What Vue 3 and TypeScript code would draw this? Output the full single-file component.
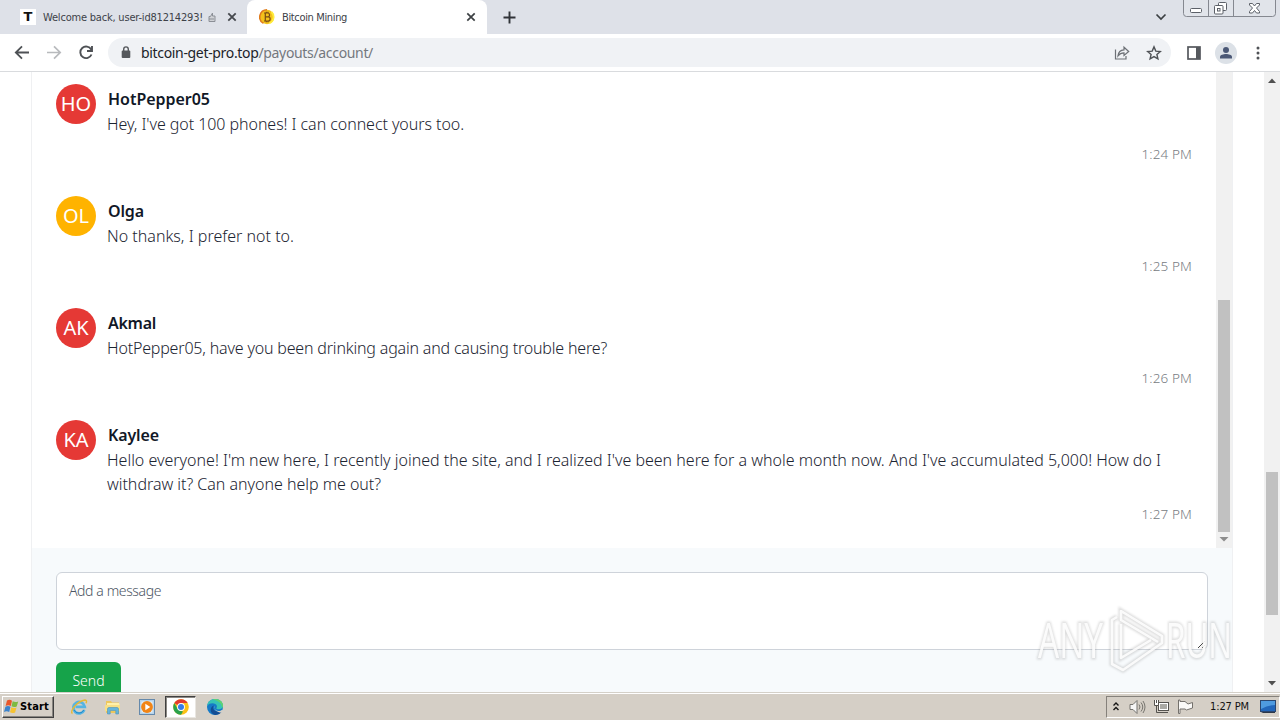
<script setup lang="ts">
interface Line { text: string; width: number }
interface Message {
  initials: string
  color: string
  name: Line
  lines: Line[]
  time: string
}

const messages: Message[] = [
  {
    initials: 'HO', color: 'red', name: { text: 'HotPepper05', width: 102 },
    lines: [{ text: "Hey, I've got 100 phones! I can connect yours too.", width: 357 }],
    time: '1:24 PM',
  },
  {
    initials: 'OL', color: 'amber', name: { text: 'Olga', width: 36 },
    lines: [{ text: 'No thanks, I prefer not to.', width: 187 }],
    time: '1:25 PM',
  },
  {
    initials: 'AK', color: 'red', name: { text: 'Akmal', width: 48 },
    lines: [{ text: 'HotPepper05, have you been drinking again and causing trouble here?', width: 500 }],
    time: '1:26 PM',
  },
  {
    initials: 'KA', color: 'red', name: { text: 'Kaylee', width: 51 },
    lines: [
      { text: "Hello everyone! I'm new here, I recently joined the site, and I realized I've been here for a whole month now. And I've accumulated 5,000! How do I", width: 1054 },
      { text: 'withdraw it? Can anyone help me out?', width: 274 },
    ],
    time: '1:27 PM',
  },
]

// Spreads the letters of a single-line label over the given width.
const vFit = {
  mounted(el: HTMLElement, binding: { value: number }) {
    const count = (el.textContent ?? '').trim().length
    const natural = el.getBoundingClientRect().width
    el.style.letterSpacing = `${(binding.value - natural) / count}px`
  },
}
</script>

<template>
  <div class="screen">
    <header class="tabstrip">
      <div class="tab first">
        <span class="t-icon">T</span>
        <span class="tab-title"><span v-fit="160">Welcome back, user-id81214293!</span></span>
        <svg class="thumb-up" width="8" height="12" viewBox="0 0 8 12"><path d="M1 5.500h1.500L4.500 2v3H7v5.500H1zM1 8h5" fill="#d0d2d6" stroke="#8b8f96" /></svg>
        <svg class="close" width="10" height="10" viewBox="0 0 10 10"><path d="M1.300 1.300l7.400 7.400M8.700 1.300L1.300 8.700" stroke="#45484d" stroke-width="1.800" /></svg>
      </div>
      <div class="tab active">
        <svg width="16" height="16" viewBox="0 0 16 16">
          <circle cx="8" cy="8" r="7.200" fill="#f4c21b" />
          <path d="M8 .8A7.200 7.200 0 0 0 4.500 14.300" fill="none" stroke="#e07a1d" stroke-width="1.600" />
          <path d="M12.500 3a7 7 0 0 1-2 11.300" fill="none" stroke="#ffec3d" stroke-width="1.800" />
          <path d="M6.300 4h2.300a1.900 1.900 0 0 1 0 3.900H6.300zM6.300 7.900h2.800a2 2 0 0 1 0 4.100H6.300zM5 4h2M5 12h2M7.300 2.700V4M9 2.700V4M7.300 12v1.300M9 12v1.300" fill="none" stroke="#7a4d13" stroke-width="1.200" />
        </svg>
        <span class="tab-title"><span v-fit="65">Bitcoin Mining</span></span>
        <svg class="close" width="10" height="10" viewBox="0 0 10 10"><path d="M1.300 1.300l7.400 7.400M8.700 1.300L1.300 8.700" stroke="#3c4043" stroke-width="1.700" /></svg>
      </div>
      <svg class="plus" width="13" height="13" viewBox="0 0 13 13"><path d="M6.500 .5v12M.5 6.500h12" stroke="#303338" stroke-width="1.900" /></svg>
      <svg class="chevron" width="12" height="8" viewBox="0 0 12 8"><path d="M1.500 1.500L6 6l4.500-4.500" fill="none" stroke="#3c4043" stroke-width="1.700" /></svg>
      <svg class="window-buttons" width="94" height="18" viewBox="0 0 94 18">
        <path d="M.5 0v13.500a3 3 0 0 0 3 3h86a3 3 0 0 0 3-3V0M25.500 0v16.500M50.500 0v16.500" fill="#e1e4ea" stroke="#858890" />
        <rect x="7.500" y="8.500" width="11" height="4" rx="1" fill="#fff" stroke="#5c6068" />
        <rect x="35.500" y="2.500" width="8" height="8" rx="1" fill="#fff" stroke="#5c6068" />
        <rect x="31.500" y="5.500" width="8.500" height="8.500" rx="1" fill="#fff" stroke="#5c6068" />
        <rect x="34.500" y="8.500" width="2.500" height="2.500" fill="#fff" stroke="#5c6068" />
        <path d="M66.500 3.500h3l2 2.500 2-2.500h3v1.500l-3 3 3 3.500v1.500h-3l-2-2.500-2 2.500h-3V11.500l3-3.500-3-3z" fill="#fff" stroke="#5c6068" />
      </svg>
    </header>

    <nav class="toolbar">
      <svg class="nav-icons" width="108" height="36" viewBox="0 0 108 36">
        <path d="M29 17.500H16.500M22 11.300L15.800 17.500l6.200 6.200" fill="none" stroke="#4e5155" stroke-width="1.800" />
        <path d="M47 17.500h12.500M54 11.300l6.200 6.200-6.200 6.200" fill="none" stroke="#b8babd" stroke-width="1.700" />
        <path d="M91.200 14.500A5.800 5.800 0 1 0 91.500 19.500M92 11v5h-5" fill="none" stroke="#4e5155" stroke-width="1.900" />
      </svg>
      <div class="omnibox">
        <svg width="10" height="14" viewBox="0 0 10 14"><rect x=".7" y="4.500" width="8.600" height="7.500" rx="1" fill="#55585c" /><path d="M2.700 5V3.200a2.300 2.300 0 0 1 4.600 0V5" fill="none" stroke="#55585c" stroke-width="1.400" /></svg>
        <span class="url"><span v-fit="232"><b>bitcoin-get-pro.top</b>/payouts/account/</span></span>
        <svg class="share" width="16" height="16" viewBox="0 0 16 16"><path d="M1.500 4.500v9.500h10.500v-3" fill="none" stroke="#6d7176" stroke-width="1.200" /><path d="M4 10.800c.4-4 2.600-5.700 6-5.900V2.200L14.700 6.500 10 10.500V7.800c-2.700 0-4.500 1-6 3z" fill="none" stroke="#6d7176" stroke-width="1.200" /></svg>
        <svg class="star" width="16" height="16" viewBox="0 0 16 16"><path d="M8 1.900l1.800 4.200 4.500.4-3.400 3 1 4.400L8 11.600l-3.900 2.300 1-4.400-3.400-3 4.500-.4z" fill="none" stroke="#4f5256" stroke-width="1.400" /></svg>
      </div>
      <svg class="side-panel" width="14" height="14" viewBox="0 0 14 14"><rect x="1" y="1" width="12" height="12" fill="#fff" stroke="#55585d" stroke-width="1.700" /><path d="M9 1h4v12H9z" fill="#55585d" /></svg>
      <svg class="profile" width="22" height="22" viewBox="0 0 22 22"><circle cx="11" cy="11" r="11" fill="#dce1e7" /><circle cx="11" cy="8" r="3" fill="#4b5876" /><path d="M5 16.500v-1.700c0-2 3.500-2.900 6-2.900s6 .9 6 2.900v1.700z" fill="#4b5876" /></svg>
      <svg class="menu-dots" width="4" height="14" viewBox="0 0 4 14"><circle cx="2" cy="2" r="1.500" fill="#4f5256" /><circle cx="2" cy="7" r="1.500" fill="#4f5256" /><circle cx="2" cy="12" r="1.500" fill="#4f5256" /></svg>
    </nav>

    <main class="viewport">
      <section class="card">
        <div class="chat">
          <ul class="messages">
            <li v-for="m in messages" :key="m.time" class="message">
              <div class="avatar" :class="m.color">{{ m.initials }}</div>
              <div class="body">
                <div class="name"><span v-fit="m.name.width">{{ m.name.text }}</span></div>
                <div v-for="l in m.lines" :key="l.text" class="line"><span v-fit="l.width">{{ l.text }}</span></div>
                <div class="time"><span v-fit="50.500">{{ m.time }}</span></div>
              </div>
            </li>
          </ul>
          <div class="inner-scroll">
            <div class="inner-thumb"></div>
            <svg width="16" height="16" viewBox="0 0 16 16"><path d="M3.500 5h9L8 9.500z" fill="#8d8d8d" /></svg>
          </div>
        </div>
        <div class="composer">
          <div class="input">
            <span><span v-fit="92">Add a message</span></span>
            <svg class="grip" width="9" height="9" viewBox="0 0 9 9"><path d="M1 8l7-7M5 8l3-3" stroke="#444" /></svg>
          </div>
          <div class="send"><span v-fit="32">Send</span></div>
        </div>
      </section>
      <div class="page-scroll">
        <svg width="16" height="17" viewBox="0 0 16 17"><path d="M4 11h8L8 6.500z" fill="#505050" /></svg>
        <div class="track"><div class="page-thumb"></div></div>
        <svg width="16" height="17" viewBox="0 0 16 17"><path d="M4 6h8l-4 4.500z" fill="#505050" /></svg>
      </div>
    </main>

    <footer class="taskbar">
      <div class="start">
        <svg width="16" height="15" viewBox="0 0 16 15">
          <path d="M3 1.500q2.500-1.500 5 .2L6.800 7Q4.300 5.500 1.600 7z" fill="#e8572b" />
          <path d="M8.700 2.200q2.500 1.500 5.500.2l-1.500 5q-2.600 1.300-5.200-.1z" fill="#7dba43" />
          <path d="M1.400 7.800q2.600-1.500 5.100 0L5.200 13Q2.700 11.500 0 12.900z" fill="#3b83cc" />
          <path d="M7.300 8.200q2.600 1.400 5.200.2l-1.400 5q-2.500 1.200-5.100-.1z" fill="#f6c332" />
        </svg>
        <span v-fit="29">Start</span>
      </div>
      <div class="quick">
        <svg class="app" width="18" height="18" viewBox="0 0 18 18">
          <path d="M14.300 12A5.700 5.700 0 1 1 14.700 8.800H5.500" fill="none" stroke="#55b4e3" stroke-width="2.800" />
          <path d="M14 11.800A5.500 5.500 0 0 1 4 12" fill="none" stroke="#258ac8" stroke-width="1" />
          <path d="M2.500 15.500C-1 14 7 3 15 2q2.500.3 1 3.300" fill="none" stroke="#e6b933" stroke-width="1.400" />
        </svg>
        <svg class="app" width="18" height="18" viewBox="0 0 18 18">
          <path d="M2 3h5l1 1.500h7V15H2z" fill="#edc75c" /><path d="M3 5h12l1 3H3z" fill="#fff0a9" /><path d="M1 7h15v6H1z" fill="#f7df86" />
          <path d="M3.500 16v-5q0-1.500 1.500-1.500h8q1.500 0 1.500 1.500v5h-2.700v-3.500H6.200V16z" fill="#65b5dc" stroke="#4b92b9" stroke-width=".6" />
        </svg>
        <svg class="app" width="18" height="18" viewBox="0 0 18 18">
          <rect x="1.500" y="1.500" width="15" height="15" fill="#b6d4eb" stroke="#6589ab" /><rect x="3.500" y="3.500" width="11" height="11" fill="#e9f2f8" /><circle cx="9" cy="9" r="5.900" fill="#f18516" /><path d="M7.300 5.800v6.400L12.300 9z" fill="#fff" />
        </svg>
        <div class="pressed">
          <svg width="16" height="16" viewBox="0 0 16 16">
            <circle cx="8" cy="8" r="7.800" fill="#fbc116" />
            <path d="M8 8L1.250 4.100A7.800 7.800 0 0 1 14.750 4.100H8z" fill="#e33b2e" />
            <path d="M8 15.800A7.800 7.800 0 0 1 1.250 4.100L4.700 10l3.300 1.900 2 .5z" fill="#2ba24c" />
            <circle cx="8" cy="8" r="3.900" fill="#fff" /><circle cx="8" cy="8" r="3" fill="#377ce8" />
          </svg>
        </div>
        <svg class="app edge" width="18" height="18" viewBox="0 0 18 18">
          <circle cx="9" cy="9" r="8" fill="#157ac7" />
          <path d="M1.100 8C2 3 5 1 9 1c5 0 8 3.300 8 6.500S14 12 11 11c-1.500-.6.300-1.500-.1-3C10.200 5 4 4 1.100 8z" fill="#36c3b5" />
          <path d="M9 1c5 0 8 3.300 8 6.500q0 1.500-.8 2.400C16 5 12 3 7 1.300z" fill="#61d36e" />
          <path d="M8 7.500c-2 2-1 7 7 6.200q1-.2.700.4A8 8 0 0 1 9 17C4 16 3 9 8 7.500z" fill="#134d94" />
          <path d="M8.500 8c-1.700 1.800 1 5.400 5.500 5l2.200-1.200 2 2-1 1C12 14.500 7 12 8.500 8z" fill="#d4d0c8" />
        </svg>
      </div>
      <div class="tray">
        <svg width="8" height="12" viewBox="0 0 8 12"><path d="M1.500 4.500L4 2l2.500 2.500M1.500 9L4 6.500 6.500 9" fill="none" stroke="#151515" stroke-width="1.400" /></svg>
        <svg class="speaker" width="17" height="16" viewBox="0 0 17 16"><path d="M1 5.500h3l4-4v13l-4-4H1z" fill="#f6f6f6" stroke="#74736f" /><path d="M10 5.500q2 2.500 0 5M12 3.500q3.500 4.500 0 9M14 2q4 6 0 12" fill="none" stroke="#77756f" /></svg>
        <svg class="network" width="17" height="16" viewBox="0 0 17 16"><rect x="5.500" y="3.500" width="10" height="8" fill="#aaa9a4" stroke="#55534f" /><rect x="6.500" y="4.500" width="8" height="6" fill="none" stroke="#fff" /><path d="M7 13.500h8M3.500 6v7.500H7" fill="none" stroke="#55534f" /><path d="M1.500 1v5.500h4V1M3.500 1v3" fill="#fff" stroke="#55534f" /></svg>
        <svg class="flag" width="17" height="16" viewBox="0 0 17 16"><path d="M1.500 1v13.500h1.500V10h5l1.500 1L15.500 9V3.500L11 5 8 2.500H3V1z" fill="#faf9f7" stroke="#74716c" /></svg>
        <span class="clock"><span v-fit="39">1:27 PM</span></span>
        <svg class="desktop" width="16" height="14" viewBox="0 0 16 14"><rect x=".5" y=".5" width="15" height="11" fill="#2367bb" stroke="#2b4771" /><path d="M1 1h14v4Q8 5 1 9z" fill="#4f9be0" /><path d="M1 12h14v1H3z" fill="#2d3848" /></svg>
      </div>
    </footer>

    <svg class="watermark" width="214" height="76" viewBox="0 0 214 76">
      <g class="mark-shade" fill="none" stroke="#777" stroke-width="5" opacity=".25">
        <path d="M84 13l-5 3v44l11 6 39-27v-7L88 7v9l37 22M88 20v34l30-18" />
        <text x="5" y="54" textLength="65" lengthAdjust="spacingAndGlyphs" stroke-width="3">ANY</text>
        <text x="133" y="54" textLength="66" lengthAdjust="spacingAndGlyphs" stroke-width="3">RUN</text>
      </g>
      <g opacity=".88">
        <path d="M84 13l-5 3v44l11 6 39-27v-7L88 7v9l37 22M88 20v34l30-18" fill="none" stroke="#fff" stroke-width="2.600" stroke-linejoin="round" />
        <text x="5" y="54" textLength="65" lengthAdjust="spacingAndGlyphs" fill="#fff">ANY</text>
        <text x="133" y="54" textLength="66" lengthAdjust="spacingAndGlyphs" fill="#fff">RUN</text>
      </g>
    </svg>
  </div>
</template>

<style>
html, body { margin: 0; overflow: hidden; }
</style>

<style scoped>
* { box-sizing: border-box; }
.screen { position: relative; display: flex; flex-direction: column; width: 1280px; height: 720px; overflow: hidden; background: #fff; color: #1f2937; font-family: "Noto Sans", "Open Sans", sans-serif; white-space: nowrap; }
svg { display: block; flex: none; }
.tabstrip { display: flex; flex: none; height: 34px; align-items: center; background: #dee1e8; }
.tab { display: flex; align-items: center; height: 34px; flex: none; }
.first { width: 247px; padding-left: 20px; border-bottom-right-radius: 8px; }
.t-icon { display: flex; align-items: center; justify-content: center; width: 16px; height: 16px; background: #fff; color: #111; font: 700 13px/16px "DejaVu Sans", sans-serif; }
.tab-title { padding-top: 1px; font: 400 11px/16px "DejaVu Sans Condensed", "DejaVu Sans", sans-serif; color: #3d4148; }
.first .tab-title { width: 164px; margin-left: 7px; }
.thumb-up { margin-left: 1px; }
.first .close { margin-left: 11px; }
.active { width: 240px; padding-left: 12px; background: #fff; border-radius: 8px 8px 0 0; }
.active .tab-title { width: 184px; margin-left: 7px; }
.plus { margin-left: 16px; }
.chevron { margin-left: 639px; }
.window-buttons { align-self: flex-start; margin-left: 16px; }
.toolbar { display: flex; flex: none; align-items: center; height: 38px; border-bottom: 1px solid #d9dbde; background: #fff; }
.omnibox { display: flex; align-items: center; width: 1063px; height: 29px; padding-left: 13px; border-radius: 15px; background: #f0f2f5; }
.url { width: 973px; margin-left: 10px; font: 400 14px/20px "Noto Sans", "Open Sans", sans-serif; color: #74787e; }
.url b { font-weight: 400; color: #202329; }
.star { margin-left: 16px; }
.side-panel { margin-left: 16px; }
.profile { margin-left: 14px; }
.menu-dots { margin-left: 19px; }
.viewport { display: flex; height: 620px; flex: none; overflow: hidden; justify-content: space-between; padding-left: 31px; }
.card { width: 1202px; height: 660px; border-left: 1px solid #eff0f2; border-right: 1px solid #eff0f2; background: #fff; }
.chat { display: flex; height: 476px; }
.messages { list-style: none; flex: 1; margin: 0; padding: 12px 24px 0; }
.message { display: flex; gap: 11px; padding-bottom: 30px; }
.avatar { display: flex; flex: none; align-items: center; justify-content: center; width: 40px; height: 40px; border-radius: 50%; color: #fff; font-size: 20px; line-height: 28px; }
.red { background: #e53935; }
.amber { background: #ffb300; }
.body { flex: 1; padding-top: 3px; }
.name { height: 25px; padding-left: 1px; font-size: 16px; line-height: 24px; font-weight: 600; color: #111827; }
.line { height: 24px; font-size: 16px; line-height: 24px; font-weight: 300; color: #1b2431; }
.time { height: 24px; margin-top: 6px; text-align: right; font-size: 13.500px; line-height: 25px; font-weight: 300; color: #777b82; }
.inner-scroll { display: flex; flex-direction: column; align-items: center; justify-content: flex-end; width: 16px; background: #f1f1f1; }
.inner-thumb { width: 12px; height: 232px; background: #c1c1c1; }
.composer { height: 184px; padding: 24px; background: #f7fafc; }
.input { display: flex; justify-content: space-between; height: 78px; padding: 8px 1px 0 12px; border: 1px solid #ced3da; border-radius: 6px; background: #fff; font-size: 14px; line-height: 20px; font-weight: 300; color: #4b5563; }
.grip { align-self: flex-end; }
.send { display: flex; align-items: center; justify-content: center; width: 65px; height: 38px; margin-top: 12px; border-radius: 6px; background: #16a34a; color: #fff; font-size: 14px; line-height: 20px; font-weight: 300; }
.page-scroll { display: flex; flex-direction: column; width: 16px; height: 620px; background: #f1f1f1; }
.track { flex: 1; padding: 383px 2px 0; }
.page-thumb { height: 143px; background: #c1c1c1; }
.taskbar { display: flex; align-items: center; flex: none; height: 28px; padding: 1px 0 1px 2px; border-top: 1px solid #d4d0c8; background: #d5cfc6; box-shadow: inset 0 1px #fff; }
.start { display: flex; align-items: center; gap: 0; width: 52px; height: 22px; padding-left: 1px; border: 1px solid; border-color: #fff #404040 #404040 #fff; box-shadow: inset -1px -1px #888580; color: #000; font: 700 11px/16px "DejaVu Sans Condensed", sans-serif; }
.quick { display: flex; align-items: center; margin-left: 16px; }
.app { margin-right: 16px; }
.pressed { display: flex; align-items: center; justify-content: center; width: 31px; height: 22px; margin-left: -7px; background: #fff; border: 1px solid; border-color: #404040 #e9e6e1 #e9e6e1 #404040; box-shadow: inset 1px 1px #8b8984; }
.edge { margin: 0 0 0 10px; }
.tray { display: flex; align-items: center; width: 174px; height: 22px; margin-left: auto; padding-left: 5px; border: 1px solid; border-color: #85817b #fff #fff #85817b; }
.speaker { margin-left: 9px; }
.network { margin-left: 7px; }
.flag { margin-left: 7px; }
.clock { width: 40px; margin-left: 16px; font: 400 11px/16px "DejaVu Sans Condensed", sans-serif; color: #111; }
.desktop { margin-left: 10px; }
.watermark { position: absolute; left: 1033px; top: 604px; font: 400 49px "Open Sans", sans-serif; }
.mark-shade { filter: blur(1.200px); }
</style>
